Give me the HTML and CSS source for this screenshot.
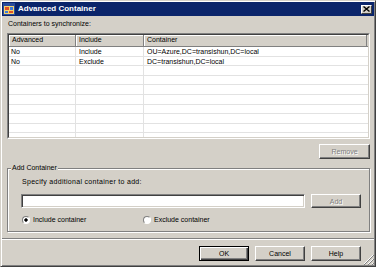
FILE: index.html
```html
<!DOCTYPE html>
<html lang="en">
<head>
    <meta charset="UTF-8">
    <meta name="viewport" content="width=device-width, initial-scale=1.0">
    <title>Advanced Container</title>
    <link rel="stylesheet" href="styles.css">
</head>
<body>
    <div class="window">
        <div class="titlebar">
            <svg class="title-icon" width="12" height="12" viewBox="0 0 12 12">
                <rect x="0.5" y="0.5" width="11" height="11" fill="#f4d36b" stroke="#2a4c9c"/>
                <rect x="1" y="1" width="10" height="2" fill="#2a4c9c"/>
                <rect x="2" y="4" width="4" height="3" fill="#e0502a"/>
                <rect x="7" y="4" width="3" height="3" fill="#3f7ad8"/>
                <rect x="2" y="8" width="3" height="2" fill="#3f7ad8"/>
                <rect x="6" y="8" width="4" height="2" fill="#e0502a"/>
            </svg>
            <span class="title">Advanced Container</span>
            <span class="close-btn">
                <svg width="7" height="6" viewBox="0 0 7 6">
                    <path d="M0.5 0.5 L6.5 5.5 M6.5 0.5 L0.5 5.5" stroke="#000" stroke-width="1.4"/>
                </svg>
            </span>
        </div>

        <div class="content">
            <div class="caption">Containers to synchronize:</div>

            <div class="listview">
                <div class="lv-inner">
                    <div class="lv-head">
                        <div class="hcell">Advanced</div>
                        <div class="hcell">Include</div>
                        <div class="hcell">Container</div>
                        <div class="hfill"></div>
                    </div>
                    <div class="lv-row">
                        <div class="cell first">No</div>
                        <div class="cell">Include</div>
                        <div class="cell last">OU=Azure,DC=transishun,DC=local</div>
                    </div>
                    <div class="lv-row">
                        <div class="cell first">No</div>
                        <div class="cell">Exclude</div>
                        <div class="cell last">DC=transishun,DC=local</div>
                    </div>
                    <div class="lv-row"><div class="cell first"></div><div class="cell"></div><div class="cell last"></div></div>
                    <div class="lv-row"><div class="cell first"></div><div class="cell"></div><div class="cell last"></div></div>
                    <div class="lv-row"><div class="cell first"></div><div class="cell"></div><div class="cell last"></div></div>
                    <div class="lv-row"><div class="cell first"></div><div class="cell"></div><div class="cell last"></div></div>
                    <div class="lv-row"><div class="cell first"></div><div class="cell"></div><div class="cell last"></div></div>
                    <div class="lv-row"><div class="cell first"></div><div class="cell"></div><div class="cell last"></div></div>
                    <div class="lv-row"><div class="cell first"></div><div class="cell"></div><div class="cell last"></div></div>
                    <div class="lv-row"><div class="cell first"></div><div class="cell"></div><div class="cell last"></div></div>
                </div>
            </div>

            <div class="remove-row">
                <button class="btn" disabled>Remove</button>
            </div>

            <fieldset class="group">
                <legend>Add Container</legend>
                <div class="prompt">Specify additional container to add:</div>
                <div class="add-row">
                    <input class="textbox" type="text">
                    <button class="btn" disabled>Add</button>
                </div>
                <div class="radios">
                    <label class="radio include"><span class="dot checked"></span>Include container</label>
                    <label class="radio"><span class="dot"></span>Exclude container</label>
                </div>
            </fieldset>
        </div>

        <div class="separator"></div>

        <div class="footer">
            <button class="btn default">OK</button>
            <button class="btn">Cancel</button>
            <button class="btn">Help</button>
            <span class="grip">
                <svg width="11" height="11" viewBox="0 0 11 11">
                    <path d="M10 1 L1 10 M10 5 L5 10 M10 9 L9 10" stroke="#fff" stroke-width="1"/>
                    <path d="M11 1 L1 11 M11 5 L5 11 M11 9 L9 11" stroke="#808080" stroke-width="1"/>
                </svg>
            </span>
        </div>
    </div>
</body>
</html>
```

FILE: styles.css
```css
* {
    box-sizing: border-box;
    margin: 0;
    padding: 0;
}

body {
    background-color: #d4d0c8;
    font-family: "Liberation Sans", Arial, sans-serif;
    font-size: 7px;
    color: #000;
}

.window {
    display: flex;
    flex-direction: column;
    width: 376px;
    height: 267px;
    padding: 1px;
    background-color: #d4d0c8;
    border: 1px solid;
    border-color: #d4d0c8 #404040 #404040 #d4d0c8;
    box-shadow: inset 1px 1px #fff, inset -1px -1px #808080;
}

/* title bar */
.titlebar {
    display: flex;
    align-items: center;
    height: 14px;
    padding-left: 1px;
    background-color: #0a246a;
}

.title-icon {
    flex: none;
}

.title {
    margin-left: 3px;
    color: #fff;
    font-size: 8px;
    font-weight: bold;
    line-height: 10px;
}

.close-btn {
    display: flex;
    align-items: center;
    justify-content: center;
    width: 11px;
    height: 9px;
    margin-left: auto;
    margin-right: 2px;
    background-color: #d4d0c8;
    border: 1px solid;
    border-color: #fff #404040 #404040 #fff;
}

/* main area */
.content {
    padding: 0 4px 0 5px;
}

.caption {
    margin-top: 3px;
    padding-left: 1px;
    line-height: 10px;
}

.listview {
    height: 106px;
    margin-top: 4px;
    border: 1px solid;
    border-color: #808080 #fff #fff #808080;
}

.lv-inner {
    height: 100%;
    overflow: hidden;
    background-color: #fff;
    border: 1px solid;
    border-color: #404040 #d4d0c8 #d4d0c8 #404040;
}

.lv-head {
    display: grid;
    grid-template-columns: 67px 68px 223px 1fr;
    height: 12px;
}

.hcell {
    padding-left: 3px;
    line-height: 10px;
    background-color: #d4d0c8;
    border-right: 1px solid #808080;
    border-bottom: 1px solid #808080;
    box-shadow: inset 1px 1px #fff;
}

.hfill {
    background-color: #d4d0c8;
    border-bottom: 1px solid #808080;
}

.lv-row {
    display: grid;
    grid-template-columns: 67px 68px 1fr;
    height: 9.6px;
    border-bottom: 1px solid #e2e2e2;
}

.cell {
    padding-left: 3px;
    padding-top: 1px;
    line-height: 8px;
    white-space: nowrap;
    border-right: 1px solid #e2e2e2;
}

.cell.first {
    padding-left: 2px;
}

.cell.last {
    border-right: none;
}

/* buttons */
.btn {
    height: 15px;
    width: 50px;
    font-family: inherit;
    font-size: 7px;
    color: #000;
    background-color: #d4d0c8;
    border: 1px solid;
    border-color: #fff #404040 #404040 #fff;
    box-shadow: inset -1px -1px #808080;
}

.btn:disabled {
    color: #808080;
    text-shadow: 1px 1px #fff;
}

.btn.default {
    border-color: #000;
    box-shadow: inset 1px 1px #fff, inset -1px -1px #404040, inset -2px -2px #808080;
}

.remove-row {
    display: flex;
    justify-content: flex-end;
    margin-top: 5px;
}

.remove-row .btn {
    width: 51px;
}

/* add container group */
.group {
    margin-top: 4px;
    padding: 4px 8px 6px 3px;
    min-width: 0;
    border: 1px solid #808080;
    box-shadow: inset 1px 1px #fff, 1px 1px #fff;
}

.group legend {
    padding: 0 1px;
    line-height: 10px;
    background-color: #d4d0c8;
}

.prompt {
    padding-left: 11px;
    line-height: 10px;
    letter-spacing: 0.3px;
}

.add-row {
    display: flex;
    gap: 6px;
    margin-top: 7px;
    margin-left: 10px;
    height: 14px;
}

.textbox {
    flex: 1;
    min-width: 0;
    height: 14px;
    background-color: #fff;
    border: 1px solid;
    border-color: #808080 #fff #fff #808080;
    box-shadow: inset 1px 1px #404040, inset -1px -1px #d4d0c8;
    outline: none;
}

.add-row .btn {
    height: 14px;
}

.radios {
    display: flex;
    margin-top: 7px;
    margin-left: 11px;
    line-height: 10px;
}

.radio {
    display: flex;
    align-items: center;
    gap: 3px;
}

.radio.include {
    width: 121px;
}

.dot {
    width: 8px;
    height: 8px;
    border-radius: 50%;
    background-color: #fff;
    border: 1px solid;
    border-color: #808080 #fff #fff #808080;
    box-shadow: 0 0 0 0.5px #d4d0c8;
}

.dot.checked {
    background: radial-gradient(circle, #000 0 1.4px, #fff 1.9px);
}

/* footer */
.separator {
    margin-top: 6px;
    border-top: 1px solid #808080;
    border-bottom: 1px solid #fff;
}

.footer {
    display: flex;
    flex: 1;
    align-items: flex-start;
    justify-content: flex-end;
    gap: 6px;
    padding-top: 6px;
}

.grip {
    display: flex;
    align-items: flex-end;
    justify-content: flex-end;
    align-self: flex-end;
    width: 13px;
    height: 12px;
    margin-left: -6px;
}
```
